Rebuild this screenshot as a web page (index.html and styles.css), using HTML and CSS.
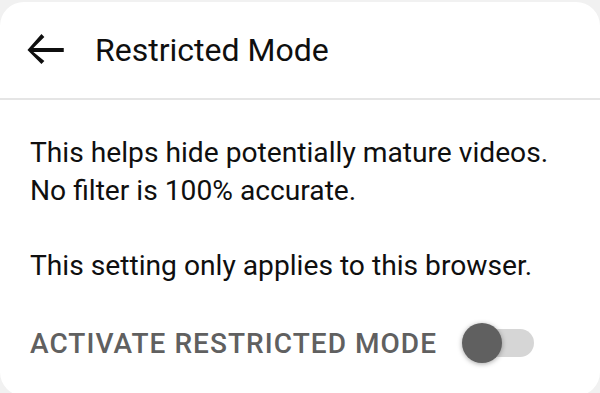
FILE: index.html
```html
<!DOCTYPE html>
<html>
<head>
<meta charset="utf-8">
<link rel="stylesheet" href="styles.css">
</head>
<body>
<div class="card">
  <div class="header">
    <svg class="back" viewBox="0 0 24 24" width="50" height="50"><path d="M21 11H6.41l5.29-5.29-1.41-1.42L3.59 12l6.7 6.71 1.41-1.42L6.41 13H21z"/></svg>
    <div class="title">Restricted Mode</div>
  </div>
  <div class="content">
    <p class="text">This helps hide potentially mature videos.<br>No filter is 100% accurate.</p>
    <p class="text">This setting only applies to this browser.</p>
    <div class="row">
      <span class="label">Activate Restricted Mode</span>
      <span class="toggle"><span class="track"></span><span class="knob"></span></span>
    </div>
  </div>
</div>
</body>
</html>
```
FILE: styles.css
```css
html, body { margin: 0; padding: 0; }
body {
  background: #f1f1f1;
  width: 600px;
  height: 393px;
  overflow: hidden;
  font-family: Roboto, "Liberation Sans", sans-serif;
}
.card {
  margin-top: 2px;
  background: #fff;
  border-radius: 24px;
  height: 394px;
}
.header {
  height: 96px;
  display: flex;
  align-items: center;
  border-bottom: 2px solid #e5e5e5;
  padding-left: 20px;
}
.back { fill: #0f0f0f; }
.title {
  font-size: 32px;
  color: #0f0f0f;
  margin-left: 25px;
}
.content { padding: 34px 30px 0; }
.text {
  font-size: 28.2px;
  line-height: 38px;
  color: #0f0f0f;
  margin: 0 0 37px;
}
.row {
  display: flex;
  align-items: center;
  margin-top: 38px;
}
.label {
  font-size: 28px;
  font-weight: 500;
  letter-spacing: 1.05px;
  text-transform: uppercase;
  color: #606060;
}
.toggle {
  position: relative;
  width: 72px;
  height: 40px;
  margin-left: 25px;
}
.track {
  position: absolute;
  left: 8px; right: 0; top: 6px;
  height: 28px;
  border-radius: 14px;
  background: #d6d6d6;
}
.knob {
  position: absolute;
  left: 0; top: 0;
  width: 40px; height: 40px;
  border-radius: 50%;
  background: #606060;
  box-shadow: 0 1px 5px rgba(0,0,0,.35);
}
```
